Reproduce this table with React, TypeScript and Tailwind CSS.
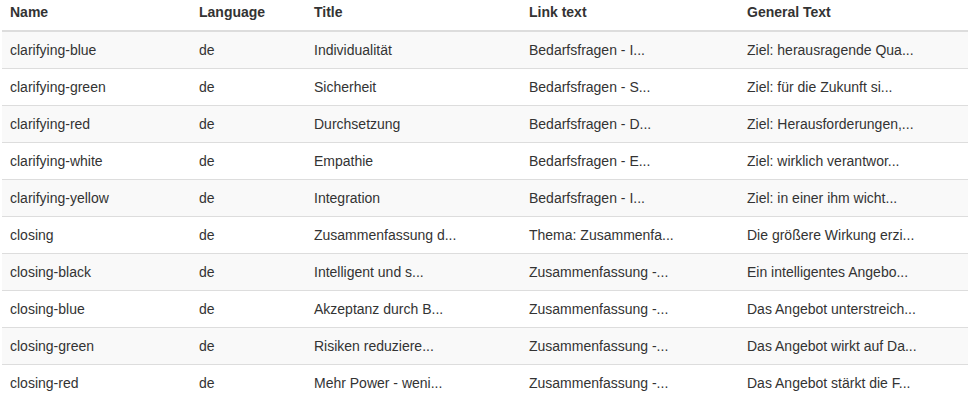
import React from "react";

const rows: string[][] = [
  ["clarifying-blue", "de", "Individualität", "Bedarfsfragen - I...", "Ziel: herausragende Qua..."],
  ["clarifying-green", "de", "Sicherheit", "Bedarfsfragen - S...", "Ziel: für die Zukunft si..."],
  ["clarifying-red", "de", "Durchsetzung", "Bedarfsfragen - D...", "Ziel: Herausforderungen,..."],
  ["clarifying-white", "de", "Empathie", "Bedarfsfragen - E...", "Ziel: wirklich verantwor..."],
  ["clarifying-yellow", "de", "Integration", "Bedarfsfragen - I...", "Ziel: in einer ihm wicht..."],
  ["closing", "de", "Zusammenfassung d...", "Thema: Zusammenfa...", "Die größere Wirkung erzi..."],
  ["closing-black", "de", "Intelligent und s...", "Zusammenfassung -...", "Ein intelligentes Angebo..."],
  ["closing-blue", "de", "Akzeptanz durch B...", "Zusammenfassung -...", "Das Angebot unterstreich..."],
  ["closing-green", "de", "Risiken reduziere...", "Zusammenfassung -...", "Das Angebot wirkt auf Da..."],
  ["closing-red", "de", "Mehr Power - weni...", "Zusammenfassung -...", "Das Angebot stärkt die F..."],
];

const headers = ["Name", "Language", "Title", "Link text", "General Text"];

export default function App() {
  return (
    <div className="w-[970px] h-[401px] overflow-hidden bg-white px-[2px] font-['Liberation_Sans',Arial,sans-serif] text-[14px] leading-[20px] text-[#333]">
      <table className="w-[966px] table-fixed border-collapse">
        <colgroup>
          <col className="w-[189px]" />
          <col className="w-[115px]" />
          <col className="w-[215px]" />
          <col className="w-[218px]" />
          <col className="w-[229px]" />
        </colgroup>
        <thead>
          <tr>
            {headers.map((h) => (
              <th
                key={h}
                className="text-left font-bold px-[8px] pt-[2px] pb-[8px] border-b-2 border-[#ddd]"
              >
                {h}
              </th>
            ))}
          </tr>
        </thead>
        <tbody>
          {rows.map((r, i) => (
            <tr key={i} className={i % 2 === 0 ? "bg-[#f9f9f9]" : "bg-white"}>
              {r.map((c, j) => (
                <td
                  key={j}
                  className={`p-[8px] whitespace-nowrap overflow-hidden ${i === 0 ? "" : "border-t border-[#ddd]"}`}
                >
                  {c}
                </td>
              ))}
            </tr>
          ))}
        </tbody>
      </table>
    </div>
  );
}
